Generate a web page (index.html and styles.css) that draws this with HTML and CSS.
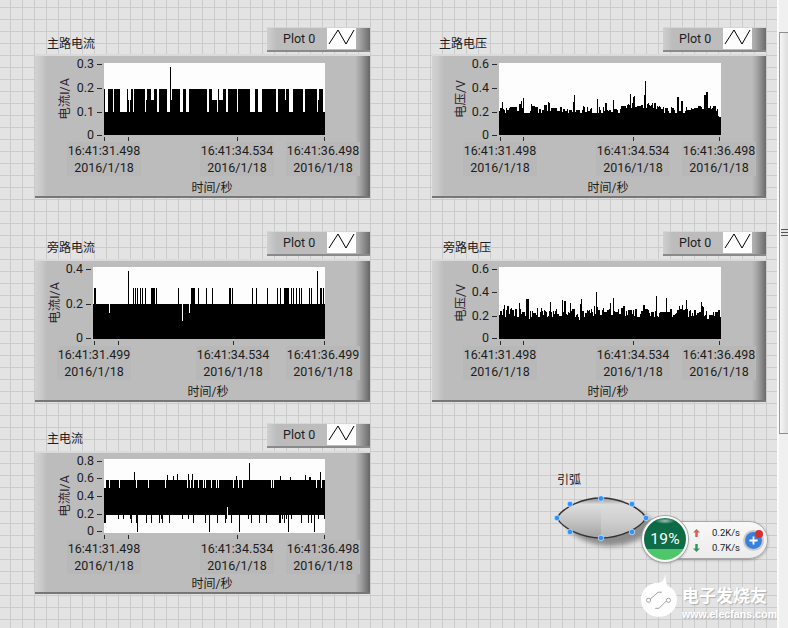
FILE: index.html
```html
<!DOCTYPE html>
<html lang="zh">
<head>
<meta charset="utf-8">
<title>LabVIEW 前面板</title>
<link rel="stylesheet" href="styles.css">
</head>
<body>
<main class="canvas">

  <section class="chart c1">
    <header class="head">
      <h2 class="title">主路电流</h2>
      <div class="legend"><span class="plot-name">Plot 0</span><svg class="swatch" viewBox="0 0 29 21"><polyline points="2,16 11,2 19,16 27,2"/></svg></div>
    </header>
    <div class="panel">
      <div class="plot" data-wave="a">
        <span class="ytitle">电流I/A</span>
        <span class="yt" style="top:1px">0.3</span><span class="yt" style="top:25px">0.2</span><span class="yt" style="top:49px">0.1</span><span class="yt" style="top:72px">0</span>
      </div>
      <div class="xaxis">
        <i class="xt" style="left:0"></i><i class="xt" style="left:24px"></i><i class="xt" style="left:133px"></i><i class="xt" style="left:220px"></i>
        <span class="xl" style="left:0">16:41:31.498<br>2016/1/18</span>
        <span class="xl" style="left:133px">16:41:34.534<br>2016/1/18</span>
        <span class="xl" style="left:219px">16:41:36.498<br>2016/1/18</span>
      </div>
      <div class="xtitle">时间/秒</div>
    </div>
  </section>

  <section class="chart c2">
    <header class="head">
      <h2 class="title">主路电压</h2>
      <div class="legend"><span class="plot-name">Plot 0</span><svg class="swatch" viewBox="0 0 29 21"><polyline points="2,16 11,2 19,16 27,2"/></svg></div>
    </header>
    <div class="panel">
      <div class="plot" data-wave="b">
        <span class="ytitle">电压/V</span>
        <span class="yt" style="top:1px">0.6</span><span class="yt" style="top:25px">0.4</span><span class="yt" style="top:49px">0.2</span><span class="yt" style="top:72px">0</span>
      </div>
      <div class="xaxis">
        <i class="xt" style="left:1px"></i><i class="xt" style="left:24px"></i><i class="xt" style="left:134px"></i><i class="xt" style="left:220px"></i>
        <span class="xl" style="left:1px">16:41:31.498<br>2016/1/18</span>
        <span class="xl" style="left:134px">16:41:34.534<br>2016/1/18</span>
        <span class="xl" style="left:220px">16:41:36.498<br>2016/1/18</span>
      </div>
      <div class="xtitle">时间/秒</div>
    </div>
  </section>

  <section class="chart c3">
    <header class="head">
      <h2 class="title">旁路电流</h2>
      <div class="legend"><span class="plot-name">Plot 0</span><svg class="swatch" viewBox="0 0 29 21"><polyline points="2,16 11,2 19,16 27,2"/></svg></div>
    </header>
    <div class="panel">
      <div class="plot" data-wave="c">
        <span class="ytitle">电流I/A</span>
        <span class="yt" style="top:2px">0.4</span><span class="yt" style="top:37px">0.2</span><span class="yt" style="top:71px">0</span>
      </div>
      <div class="xaxis">
        <i class="xt" style="left:1px"></i><i class="xt" style="left:25px"></i><i class="xt" style="left:140px"></i><i class="xt" style="left:231px"></i>
        <span class="xl" style="left:1px">16:41:31.499<br>2016/1/18</span>
        <span class="xl" style="left:140px">16:41:34.534<br>2016/1/18</span>
        <span class="xl" style="left:230px">16:41:36.499<br>2016/1/18</span>
      </div>
      <div class="xtitle">时间/秒</div>
    </div>
  </section>

  <section class="chart c4">
    <header class="head">
      <h2 class="title">旁路电压</h2>
      <div class="legend"><span class="plot-name">Plot 0</span><svg class="swatch" viewBox="0 0 29 21"><polyline points="2,16 11,2 19,16 27,2"/></svg></div>
    </header>
    <div class="panel">
      <div class="plot" data-wave="d">
        <span class="ytitle">电压/V</span>
        <span class="yt" style="top:2px">0.6</span><span class="yt" style="top:25px">0.4</span><span class="yt" style="top:49px">0.2</span><span class="yt" style="top:71px">0</span>
      </div>
      <div class="xaxis">
        <i class="xt" style="left:1px"></i><i class="xt" style="left:24px"></i><i class="xt" style="left:134px"></i><i class="xt" style="left:220px"></i>
        <span class="xl" style="left:1px">16:41:31.498<br>2016/1/18</span>
        <span class="xl" style="left:134px">16:41:34.534<br>2016/1/18</span>
        <span class="xl" style="left:220px">16:41:36.498<br>2016/1/18</span>
      </div>
      <div class="xtitle">时间/秒</div>
    </div>
  </section>

  <section class="chart c5">
    <header class="head">
      <h2 class="title">主电流</h2>
      <div class="legend"><span class="plot-name">Plot 0</span><svg class="swatch" viewBox="0 0 29 21"><polyline points="2,16 11,2 19,16 27,2"/></svg></div>
    </header>
    <div class="panel">
      <div class="plot" data-wave="e">
        <span class="ytitle">电流I/A</span>
        <span class="yt" style="top:2px">0.8</span><span class="yt" style="top:19px">0.6</span><span class="yt" style="top:37px">0.4</span><span class="yt" style="top:55px">0.2</span><span class="yt" style="top:72px">0</span>
      </div>
      <div class="xaxis">
        <i class="xt" style="left:0"></i><i class="xt" style="left:24px"></i><i class="xt" style="left:133px"></i><i class="xt" style="left:220px"></i>
        <span class="xl" style="left:0">16:41:31.498<br>2016/1/18</span>
        <span class="xl" style="left:133px">16:41:34.534<br>2016/1/18</span>
        <span class="xl" style="left:219px">16:41:36.498<br>2016/1/18</span>
      </div>
      <div class="xtitle">时间/秒</div>
    </div>
  </section>

  <div class="arc">
    <span class="arc-label">引弧</span>
    <svg class="arc-btn" viewBox="0 0 110 62">
      <defs>
        <linearGradient id="lensL" x1="0" y1="0" x2="0" y2="1"><stop offset="0" stop-color="#8a8a8a"/><stop offset=".16" stop-color="#dedede"/><stop offset=".6" stop-color="#c2c2c2"/><stop offset="1" stop-color="#a2a2a2"/></linearGradient>
        <linearGradient id="lensR" x1="0" y1="0" x2="0" y2="1"><stop offset="0" stop-color="#949494"/><stop offset=".16" stop-color="#dcdcdc"/><stop offset=".5" stop-color="#d2d2d2"/><stop offset="1" stop-color="#b8b8b8"/></linearGradient>
        <filter id="soft" x="-20%" y="-30%" width="140%" height="160%"><feGaussianBlur stdDeviation="2.5"/></filter>
      </defs>
      <path class="lens-shadow" filter="url(#soft)" d="M14 28 C20 16 40 9 58 9 C77 9 97 16 103 28 C97 40 77 49 58 49 C40 49 20 40 14 28Z"/>
      <path fill="url(#lensL)" d="M5 21 C11 10 31 1 49 1 V41 C31 41 11 32 5 21Z"/>
      <path fill="url(#lensR)" d="M49 1 C67 1 88 10 94 21 C88 32 67 41 49 41Z"/>
      <path class="lens-line" d="M5 21 C11 10 31 1 49 1 C67 1 88 10 94 21 C88 32 67 41 49 41 C31 41 11 32 5 21Z"/>
      <g class="handles">
        <circle cx="5" cy="21" r="2.800"/><circle cx="18" cy="7" r="2.800"/><circle cx="49" cy="1.500" r="2.800"/><circle cx="80" cy="7" r="2.800"/>
        <circle cx="94" cy="21" r="2.800"/><circle cx="80" cy="35" r="2.800"/><circle cx="49" cy="41" r="2.800"/><circle cx="18" cy="35" r="2.800"/>
      </g>
    </svg>
  </div>

  <aside class="net">
    <div class="net-ball"><span class="net-pct">19%</span></div>
    <div class="net-pill">
      <div class="net-rows">
        <div class="net-row"><svg class="arrow" viewBox="0 0 8 9"><path class="up" d="M4 0 L8 4 H5.400 V9 H2.600 V4 H0Z"/></svg><span class="speed">0.2K/s</span></div>
        <div class="net-row"><svg class="arrow" viewBox="0 0 8 9"><path class="down" d="M4 9 L8 5 H5.400 V0 H2.600 V5 H0Z"/></svg><span class="speed">0.7K/s</span></div>
      </div>
      <div class="plus"><svg class="plus-ico" viewBox="0 0 10 10"><path d="M4 0.500 H6 V4 H9.500 V6 H6 V9.500 H4 V6 H0.500 V4 H4Z"/></svg><i class="plus-dot"></i></div>
    </div>
  </aside>

  <div class="mark">
    <svg class="mark-logo" viewBox="0 0 38 46">
      <path class="mark-drop" d="M25 0 C27 6 26 9 28 12 C34 15 38 20 38 27 C38 37 30 45 19 45 C8 45 0 37 0 27 C0 16 9 9 18 9 C23 9 25 5 25 0Z"/>
      <path class="mark-circuit" d="M9 27 L18 19 H22 M28 27 L19 36 H15"/>
      <circle class="mark-node" cx="8" cy="27.500" r="2.200"/><circle class="mark-node" cx="29" cy="27.500" r="2.200"/>
    </svg>
    <div class="mark-text">
      <span class="mark-cn">电子发烧友</span>
      <span class="mark-en">www.elecfans.com</span>
    </div>
  </div>

  <div class="scrollbar"><div class="thumb"><i class="grip"></i></div></div>

</main>
<script src="app.js"></script>
</body>
</html>
```

FILE: styles.css
```css
* { box-sizing: border-box; }
html, body { margin: 0; padding: 0; }
body { width: 788px; height: 628px; overflow: hidden; }

.canvas {
  position: relative;
  width: 788px;
  height: 628px;
  overflow: hidden;
  background-color: #e3e3e3;
  background-image:
    linear-gradient(to right, #cbcbcb 1px, transparent 1px),
    linear-gradient(to bottom, #cbcbcb 1px, transparent 1px);
  background-size: 12px 12px;
  background-position: 10px 7px;
  font-family: Roboto, "Noto Sans CJK SC", sans-serif;
  color: #1c1c1c;
}

/* charts: windows on a free canvas */
.chart { position: absolute; display: flex; flex-direction: column; }
.c1 { left: 35px;  top: 27px;  width: 335px; --plot-left: 69px; --plot-h: 72px; --title-x: 12px; --title-b: 2px; --head: 27px; --panel-h: 144px; --pad-top: 9px; --axis-h: 43px; --xt-shift: -5px; --yt-x: -39px; }
.c2 { left: 432px; top: 27px;  width: 334px; --plot-left: 67px; --plot-h: 72px; --title-x: 7px;  --title-b: 2px; --head: 27px; --panel-h: 144px; --pad-top: 9px; --axis-h: 43px; --xt-shift: -4px; --yt-x: -38px; }
.c3 { left: 35px;  top: 231px; width: 335px; --plot-left: 58px; --plot-h: 72px; --title-x: 12px; --title-b: 3px; --head: 28px; --panel-h: 143px; --pad-top: 8px; --axis-h: 43px; --xt-shift: -2px; --yt-x: -38px; }
.c4 { left: 432px; top: 231px; width: 334px; --plot-left: 67px; --plot-h: 72px; --title-x: 11px; --title-b: 3px; --head: 28px; --panel-h: 143px; --pad-top: 8px; --axis-h: 43px; --xt-shift: -4px; --yt-x: -38px; }
.c5 { left: 35px;  top: 423px; width: 335px; --plot-left: 69px; --plot-h: 74px; --title-x: 12px; --title-b: 4px; --head: 28px; --panel-h: 143px; --pad-top: 8px; --axis-h: 41px; --xt-shift: -5px; --yt-x: -39px; }

.head {
  height: var(--head);
  display: flex;
  justify-content: space-between;
  align-items: flex-start;
}
.title {
  margin: auto 0 var(--title-b) var(--title-x);
  font-size: 12px;
  line-height: 16px;
  font-weight: 400;
}
.legend {
  width: 103px;
  height: 25px;
  display: flex;
  align-items: center;
  padding: 0 14px 1px 16px;
  justify-content: space-between;
  background: linear-gradient(to right, #cfcfcf 0, #bcbcbc 10px, #bdbdbd 86px, #a8a8a8 92px, #6b6b6b 103px);
  border-top: 1px solid #d6d6d6;
  border-bottom: 2px solid #8a8a8a;
}
.plot-name { font-size: 12.5px; line-height: 16px; }
.swatch { width: 29px; height: 21px; background: #fdfdfd; display: block; flex: none; }
.swatch polyline { fill: none; stroke: #000; stroke-width: 1; }

.panel {
  height: var(--panel-h);
  padding: var(--pad-top) 45px 0 var(--plot-left);
  background: linear-gradient(to right, #d2d2d2 0, #cacaca 6px, #bcbcbc 12px, #bcbcbc 320px, #a0a0a0 326px, #6a6a6a 334px);
  border-top: 2px solid #dadada;
  border-bottom: 2px solid #777;
  display: flex;
  flex-direction: column;
}
.plot {
  position: relative;
  height: var(--plot-h);
  margin-top: -2px;
  background: #fdfdfd;
  flex: none;
}
.wave { display: block; width: 100%; height: 100%; shape-rendering: crispEdges; }
.wave path { stroke: #000; stroke-width: 1; fill: none; }

.yt {
  position: absolute;
  right: 100%;
  margin-right: 10px;
  transform: translateY(-50%);
  font-size: 12.5px;
  line-height: 14px;
  white-space: nowrap;
}
.yt::after {
  content: "";
  position: absolute;
  left: 100%;
  top: 7px;
  margin-left: 3px;
  width: 5px;
  height: 1px;
  background: #2a2a2a;
}
.ytitle {
  position: absolute;
  top: 50%;
  left: var(--yt-x);
  font-size: 12.5px;
  line-height: 14px;
  color: #2c2433;
  white-space: nowrap;
  transform: translate(-50%, -50%) rotate(-90deg);
}

.xaxis { position: relative; height: var(--axis-h); flex: none; }
.xt {
  position: absolute;
  top: 2px;
  width: 1px;
  height: 4px;
  background: #2a2a2a;
}
.xl {
  position: absolute;
  top: 7px;
  width: 74px;
  margin-left: -37px;
  text-align: center;
  font-size: 12.5px;
  line-height: 17px;
  background: #b8b8b8;
  white-space: nowrap;
}
.xtitle {
  margin-left: var(--xt-shift);
  text-align: center;
  font-size: 12px;
  line-height: 16px;
  margin-top: 2px;
}

/* button */
.arc { position: absolute; left: 552px; top: 472px; width: 110px; }
.arc-label { display: block; margin-left: 5px; font-size: 12px; line-height: 16px; }
.arc-btn { display: block; width: 110px; height: 62px; margin-top: 9px; overflow: visible; }
.lens-shadow { fill: #7f7f7f; opacity: .85; }
.lens-line { fill: none; stroke: #333; stroke-width: 1.500; }
.handles circle { fill: #2f93f7; stroke: #e8f3ff; stroke-width: .6; }

/* network widget */
.net { position: absolute; left: 642px; top: 516px; width: 127px; height: 46px; }
.net-ball {
  position: absolute;
  left: 0;
  top: 0;
  z-index: 1;
  width: 46px;
  height: 46px;
  border-radius: 50%;
  border: 2px solid #fafafa;
  box-shadow: 0 0 0 1px #a5a5a5, 0 1px 3px rgba(0,0,0,.35);
  background:
    radial-gradient(ellipse 10px 3px at 50% 7%, rgba(255,255,255,.6), transparent),
    linear-gradient(to bottom, #0b6a46 0, #0f6d47 75%, #4dc76a 75%, #4dc76a 100%);
  display: flex;
  align-items: center;
  justify-content: center;
}
.net-pct { color: #fff; font-size: 15.5px; line-height: 18px; letter-spacing: .2px; }
.net-pill {
  position: absolute;
  left: 20px;
  top: 5px;
  width: 106px;
  height: 38px;
  border-radius: 19px;
  background: linear-gradient(to bottom, #f8f8f8, #ececec);
  border: 1px solid #a9a9a9;
  box-shadow: 0 1px 3px rgba(0,0,0,.3);
  display: flex;
  align-items: center;
  padding-left: 30px;
}
.net-rows { display: flex; flex-direction: column; gap: 4px; width: 47px; flex: none; }
.net-row { display: flex; align-items: center; justify-content: space-between; height: 11px; }
.arrow { width: 7px; height: 8px; display: block; }
.up { fill: #df5a48; }
.down { fill: #2f9a56; }
.speed { font-size: 9.500px; line-height: 11px; color: #222; }
.plus {
  position: relative;
  flex: none;
  margin-left: 5px;
  width: 17px;
  height: 17px;
  border-radius: 50%;
  background: #3a80da;
  box-shadow: 0 0 0 2px #c9c9c9;
  display: flex;
  align-items: center;
  justify-content: center;
}
.plus-ico { width: 9px; height: 9px; display: block; }
.plus-ico path { fill: #fff; }
.plus-dot {
  position: absolute;
  right: -1px;
  top: -2px;
  width: 8px;
  height: 8px;
  border-radius: 50%;
  background: #d6302e;
}

/* watermark */
.mark { position: absolute; left: 641px; top: 574px; display: flex; gap: 5px; }
.mark-logo { width: 36px; height: 44px; display: block; flex: none; }
.mark-drop { fill: #fff; }
.mark-circuit { fill: none; stroke: #9d9d9d; stroke-width: 1; }
.mark-node { fill: #fff; stroke: #9d9d9d; stroke-width: 1; }
.mark-text { display: flex; flex-direction: column; color: #fff; padding-top: 11px; }
.mark-cn {
  font-family: "Noto Sans CJK SC", sans-serif;
  font-weight: 700;
  font-size: 17px;
  line-height: 20px;
  text-shadow: 1px 1px 1px #b0b0b0;
  white-space: nowrap;
}
.mark-en {
  font-family: "Liberation Sans", sans-serif;
  font-weight: 700;
  font-size: 10.5px;
  line-height: 14px;
  margin-top: 2px;
  letter-spacing: .1px;
  text-shadow: 1px 1px 1px #b0b0b0;
  white-space: nowrap;
}

/* scrollbar */
.scrollbar {
  position: absolute;
  left: 777px;
  top: 0;
  width: 11px;
  height: 628px;
  padding-top: 32px;
  background: #f0f0f0;
  border-left: 2px solid #fbfbfb;
}
.thumb {
  height: 402px;
  display: flex;
  align-items: center;
  justify-content: flex-end;
  background: linear-gradient(to right, #f6f6f6 0, #e6e6e6 5px, #dcdcdc 9px);
  border-top: 1px solid #8c8c8c;
  border-bottom: 1px solid #8c8c8c;
  border-left: 1px solid #9c9c9c;
}
.grip {
  display: block;
  width: 7px;
  height: 9px;
  background: repeating-linear-gradient(to bottom, #555 0, #555 1px, #e6e6e6 1px, #e6e6e6 3px);
}
```

FILE: app.js
```js
(function () {
  function lcg(seed) {
    var s = seed;
    return function () {
      s = (s * 1664525 + 1013904223) % 4294967296;
      return s / 4294967296;
    };
  }

  // Each generator returns the [top, bottom] span of black for a pixel column.
  var waves = {
    a: function (w, h) {
      var r = lcg(11), out = [], x = 0;
      while (x < w) {
        var p = r(), len = 1 + Math.floor(r() * r() * 4);
        var top = p < 0.6 ? 26 : p < 0.7 ? 37 : 49;
        if (top === 26) len += Math.floor(r() * 3);
        for (var i = 0; i < len && x < w; i++, x++) out.push([top, h]);
      }
      out[66] = [4, h];
      return out;
    },
    b: function (w, h) {
      var r = lcg(5), out = [], prev = 48;
      for (var x = 0; x < w; x++) {
        var lift = (x > 120 && x < 165 ? 4 : 0) + (x > 195 && x < 215 ? 4 : 0);
        var top = 50 - lift - Math.floor(r() * 7);
        if (r() < 0.14) top -= 4 + Math.floor(r() * 8);
        if (r() < 0.35) top = prev;
        prev = top;
        out.push([top, h]);
      }
      out[146] = [18, h]; out[75] = [32, h]; out[207] = [29, h]; out[208] = [29, h];
      out[w - 1] = [54, h]; out[w - 2] = [54, h]; out[w - 3] = [53, h];
      return out;
    },
    c: function (w, h) {
      var out = [], x;
      for (x = 0; x < w; x++) out.push([37, h]);
      var spikes = [193, 195, 310, 315, 323, 330, 337, 345, 365, 367, 370, 372, 378, 445, 483, 487, 490, 493,
        505, 530, 548, 597, 600, 608, 668, 680, 713, 742, 752, 762, 764, 767, 770, 773, 776, 785, 790, 798,
        808, 815, 838, 845, 870, 875, 880];
      spikes.forEach(function (z) { out[Math.round((z - 190) / 3)] = [21, h]; });
      out[35] = [4, h]; out[224] = [4, h];
      out[16] = [46, h]; out[89] = [54, h]; out[96] = [46, h];
      return out;
    },
    d: function (w, h) {
      var r = lcg(29), out = [], prev = 46;
      for (var x = 0; x < w; x++) {
        var top = 50 - Math.floor(r() * 9);
        var p = r();
        if (p < 0.16) top -= 5 + Math.floor(r() * 10);
        else if (p < 0.18) top = 50 + Math.floor(r() * 6);
        else if (r() < 0.3) top = prev;
        prev = top;
        out.push([top, h]);
      }
      out[97] = [25, h]; out[80] = [53, h];
      return out;
    },
    e: function (w, h) {
      var r = lcg(71), out = [];
      for (var x = 0; x < w; x++) {
        var p = r(), q = r();
        var top = p < 0.07 ? 29 : p < 0.13 ? 13 + Math.floor(r() * 6) : 21;
        var bot = q < 0.78 ? 56 : q < 0.93 ? 64 : 60;
        out.push([top, bot]);
      }
      out[0] = [29, 64]; out[1] = [29, 64];
      out[145] = [4, 56]; out[123] = [21, 48];
      [33, 105, 135, 184, 210].forEach(function (i) { out[i] = [21, 73]; });
      return out;
    }
  };

  var NS = 'http://www.w3.org/2000/svg';
  document.querySelectorAll('.plot').forEach(function (plot) {
    var w = plot.clientWidth, h = plot.clientHeight;
    var cols = waves[plot.dataset.wave](w, h);
    var d = '';
    cols.forEach(function (c, x) { d += 'M' + (x + 0.5) + ' ' + c[0] + 'V' + c[1]; });
    var svg = document.createElementNS(NS, 'svg');
    svg.setAttribute('class', 'wave');
    svg.setAttribute('viewBox', '0 0 ' + w + ' ' + h);
    var path = document.createElementNS(NS, 'path');
    path.setAttribute('d', d);
    svg.appendChild(path);
    plot.insertBefore(svg, plot.firstChild);
  });
})();
```
